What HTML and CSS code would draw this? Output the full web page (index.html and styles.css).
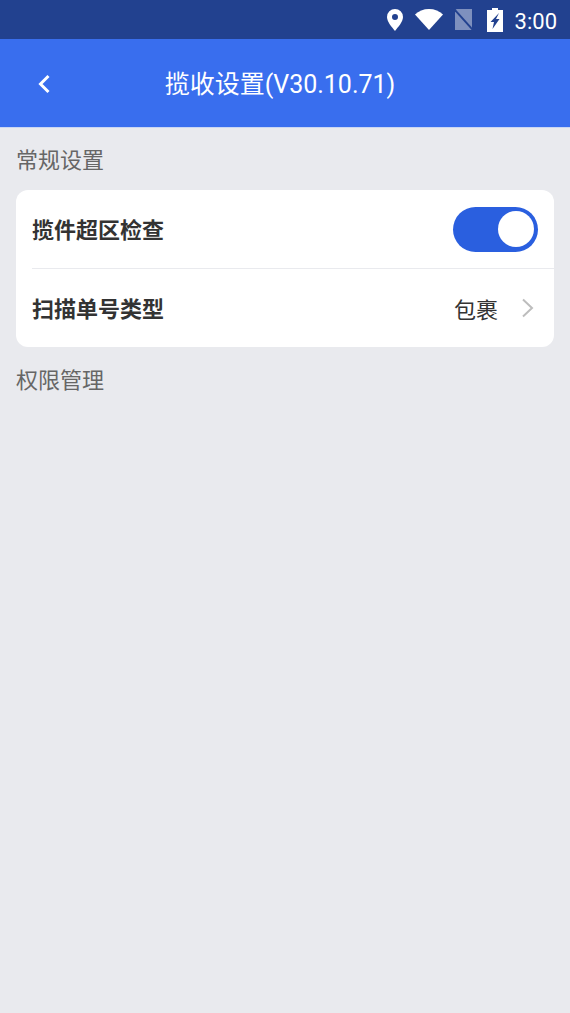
FILE: index.html
```html
<!DOCTYPE html>
<html lang="zh-CN">
<head>
<meta charset="utf-8">
<title>揽收设置</title>
<link rel="stylesheet" href="styles.css">
</head>
<body>
<div class="status">
  <svg class="i-pin" viewBox="0 0 16 22"><path fill="#fff" fill-rule="evenodd" d="M8 0a8 8 0 0 1 8 8c0 5-5 10-8 14C5 18 0 13 0 8a8 8 0 0 1 8-8zm0 5a3 3 0 1 0 0 6 3 3 0 0 0 0-6z"/></svg>
  <svg class="i-wifi" viewBox="0 0 28 21"><path fill="#fff" d="M14 21 0 5.500C3.500 2 8.500 0 14 0s10.500 2 14 5.500z"/></svg>
  <svg class="i-sim" viewBox="0 0 17 21"><path fill="#fff" fill-opacity=".42" d="M2 0h15v21H0V2a2 2 0 0 1 2-2z"/><path stroke="#22418f" stroke-width="2" d="M-1 0l19 21"/></svg>
  <svg class="i-batt" viewBox="0 0 16 24"><path fill="#fff" fill-rule="evenodd" d="M5 0h6v2h5v22H0V2h5zm7 5L3.500 14H7l-1.500 7 7-10H9z"/></svg>
  <span class="time">3:00</span>
</div>
<header class="bar">
  <svg class="back" viewBox="0 0 14 20"><path fill="none" stroke="#fff" stroke-width="3" d="M11.500 2 3.500 10l8 8"/></svg>
  <h1 class="title">揽收设置(V30.10.71)</h1>
</header>
<main>
  <div class="section">常规设置</div>
  <div class="card">
    <div class="row">
      <span class="label">揽件超区检查</span>
      <span class="switch"><span class="knob"></span></span>
    </div>
    <div class="row">
      <span class="label">扫描单号类型</span>
      <span class="value">包裹</span>
      <svg class="chev" viewBox="0 0 14 20"><path fill="none" stroke="#bdbdbd" stroke-width="2" d="M2 1.500 11 10l-9 8.500"/></svg>
    </div>
  </div>
  <div class="section">权限管理</div>
</main>
</body>
</html>
```
FILE: styles.css
```css
* { box-sizing: border-box; }
html, body { margin: 0; height: 100%; }
body {
  background: #e9eaee;
  font-family: "Noto Sans CJK SC", Roboto, sans-serif;
  overflow: hidden;
}
.status {
  height: 39px;
  background: #22418f;
  display: flex;
  align-items: center;
  justify-content: flex-end;
  padding-right: 13px;
}
.i-pin { width: 16px; height: 22px; margin-right: 12px; }
.i-wifi { width: 28px; height: 21px; margin-right: 12px; }
.i-sim { width: 17px; height: 21px; margin-right: 15px; }
.i-batt { width: 16px; height: 24px; margin-right: 12px; }
.time { font: 400 22px/39px Roboto, sans-serif; color: #fff; padding-top: 3px; }
.bar {
  height: 89px;
  background: #396eee;
  display: flex;
  align-items: center;
  justify-content: center;
  position: relative;
  border-bottom: 1px solid #c9d6f3;
}
.back { position: absolute; left: 37px; top: 35px; width: 14px; height: 20px; }
.title {
  margin: 0;
  font-family: Roboto, "Noto Sans CJK SC", sans-serif;
  font-size: 25px;
  font-weight: 400;
  color: #fff;
  line-height: 32px;
  padding: 4px 10px 0 0;
}
main { padding: 0 16px; }
.section {
  font-size: 22px;
  line-height: 32px;
  color: #666;
  padding-top: 14px;
  height: 62px;
}
.card { background: #fff; border-radius: 12px; overflow: hidden; margin-bottom: 1px; }
.row {
  height: 78px;
  margin-left: 16px;
  padding-right: 16px;
  display: flex;
  align-items: center;
}
.row + .row { border-top: 1px solid #e9eaee; height: 79px; }
.label { font-size: 22px; font-weight: 700; color: #333; flex: 1; line-height: 30px; padding-bottom: 2px; }
.value { font-size: 22px; color: #333; margin-right: 23px; line-height: 30px; }
.switch {
  width: 85px;
  height: 45px;
  border-radius: 23px;
  background: #2a5fdf;
  display: flex;
  align-items: center;
  justify-content: flex-end;
  padding-right: 4px;
}
.knob { width: 36px; height: 36px; border-radius: 50%; background: #fff; }
.chev { width: 14px; height: 20px; margin-right: 3px; }
```
